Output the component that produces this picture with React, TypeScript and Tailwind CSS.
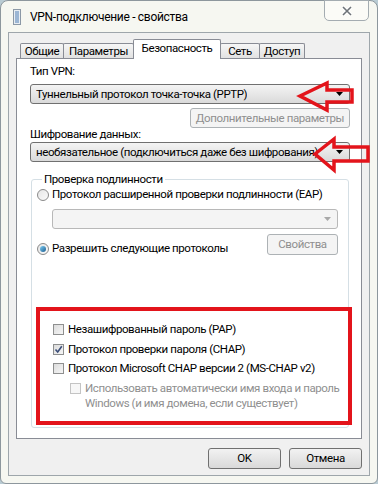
import type { ReactNode } from 'react'

const FONT = { fontFamily: 'Roboto, "Liberation Sans", Arial, sans-serif' }

function ComboArrow({ disabled }: { disabled?: boolean }) {
  return (
    <svg width="7" height="4" viewBox="0 0 7 4" className="shrink-0">
      <path d="M0 0 L7 0 L3.5 4 Z" fill={disabled ? '#a8a8a8' : '#000'} />
    </svg>
  )
}

function Combo({ text, disabled }: { text?: string; disabled?: boolean }) {
  return (
    <div
      className={`h-[20px] flex items-center justify-between pl-[5px] pr-[6px] rounded-[3px] border ${
        disabled
          ? 'border-[#b8b8b8] bg-[#f4f4f4]'
          : 'border-[#707070] bg-linear-to-b from-[#f4f4f4] to-[#dadada]'
      }`}
    >
      <span className="truncate">{text}</span>
      <ComboArrow disabled={disabled} />
    </div>
  )
}

function Button({
  children,
  disabled,
  className = '',
}: {
  children: ReactNode
  disabled?: boolean
  className?: string
}) {
  return (
    <div
      className={`flex items-center justify-center rounded-[3px] border ${
        disabled
          ? 'border-[#adb2b5] bg-[#f4f4f4] text-[#8f8f8f]'
          : 'border-[#707070] bg-linear-to-b from-[#f2f2f2] to-[#d9d9d9] text-black'
      } ${className}`}
    >
      {children}
    </div>
  )
}

function Radio({ checked }: { checked?: boolean }) {
  return (
    <span className="w-[12px] h-[12px] rounded-full border border-[#8a8a8a] bg-linear-to-br from-[#e6e6e6] to-[#fafafa] flex items-center justify-center shrink-0">
      {checked && (
        <span className="w-[6px] h-[6px] rounded-full bg-linear-to-br from-[#7fd0f6] to-[#1a5d8f]" />
      )}
    </span>
  )
}

function Check({ checked, disabled }: { checked?: boolean; disabled?: boolean }) {
  return (
    <span
      className={`w-[11px] h-[11px] border flex items-center justify-center shrink-0 ${
        disabled
          ? 'border-[#c4c4c4] bg-[#f7f7f7]'
          : 'border-[#8e8f8f] bg-linear-to-br from-[#dcdcdc] to-[#f6f6f6]'
      }`}
    >
      {checked && (
        <svg width="9" height="9" viewBox="0 0 9 9">
          <path d="M1.5 4.5 L3.7 7 L7.8 1.2" fill="none" stroke="#3b4e79" strokeWidth="1.6" />
        </svg>
      )}
    </span>
  )
}

const TABS = [
  { label: 'Общие', w: 'w-[44px]' },
  { label: 'Параметры', w: 'w-[71px]' },
  { label: 'Безопасность', w: 'w-[88px]', active: true },
  { label: 'Сеть', w: 'w-[40px]' },
  { label: 'Доступ', w: 'w-[46px]' },
]

export default function App() {
  return (
    <div
      className="relative w-[378px] h-[484px] bg-[#b9cbd3] text-[11.5px] leading-[15px] text-black whitespace-nowrap tracking-[-0.4px]"
      style={FONT}
    >
      <div className="h-full flex flex-col rounded-t-[8px] rounded-b-[6px] border border-[#8d979d] bg-[#f6f7f1] px-[7px] pb-[7px]">
        {/* title bar */}
        <div className="h-[31px] flex items-start shrink-0">
          <svg width="8" height="16" viewBox="0 0 8 16" className="mt-[8px] ml-[5px]">
            <rect x="0.5" y="0.5" width="7" height="15" fill="#e8edf2" stroke="#8b98a6" />
            <path d="M2 3 H6 M2 5 H6 M2 7 H6 M2 9 H6 M2 11 H6 M2 13 H6" stroke="#4f7fb5" strokeWidth="1" />
          </svg>
          <span className="ml-[9px] mt-[9px] text-[12px] tracking-[-0.3px] text-black">VPN-подключение - свойства</span>
          <div className="ml-auto -mt-px mr-px w-[45px] h-[21px] rounded-b-[5px] border border-[#a4acb1] bg-[#fbfbf7] flex items-center justify-center">
            <svg width="12" height="10" viewBox="0 0 12 10">
              <path d="M2 1 L10 9 M10 1 L2 9" stroke="#ffffff" strokeWidth="3.2" />
              <path d="M2 1 L10 9 M10 1 L2 9" stroke="#6e7378" strokeWidth="1.6" />
            </svg>
          </div>
        </div>

        {/* client area */}
        <div className="flex-1 flex flex-col border border-[#9ea6ab] bg-[#f0f0f0] pl-[7px] pr-[7px] pt-[6px]">
          <div className="flex items-end h-[19px] pl-[4px] shrink-0">
            {TABS.map((t) =>
              t.active ? (
                <div
                  key={t.label}
                  className={`${t.w} h-[20px] -mb-px -ml-px relative z-10 bg-white border border-b-0 border-[#898c95] rounded-t-[2px] flex items-start justify-center pt-[1px]`}
                >
                  {t.label}
                </div>
              ) : (
                <div
                  key={t.label}
                  className={`${t.w} h-[15px] bg-linear-to-b from-[#f6f6f6] to-[#e1e1e1] border border-b-0 border-[#898c95] rounded-t-[2px] flex items-center justify-center -ml-px first:ml-0`}
                >
                  {t.label}
                </div>
              )
            )}
          </div>

          {/* tab panel */}
          <div className="h-[381px] border border-[#898c95] bg-white pl-[13px] pr-[11px] pt-[5px] flex flex-col shrink-0">
            <div>Тип VPN:</div>
            <div className="mt-[5px]">
              <Combo text="Туннельный протокол точка-точка (PPTP)" />
            </div>
            <div className="flex justify-end mt-[4px]">
              <Button disabled className="w-[160px] h-[20px]">
                Дополнительные параметры
              </Button>
            </div>
            <div className="mt-[-1px]">Шифрование данных:</div>
            <div className="mt-[0px]">
              <Combo text="необязательное (подключиться даже без шифрования)" />
            </div>

            <fieldset className="mt-[10px] mx-[1px] min-w-0 h-[256px] border border-[#d5dfe5] rounded-[3px] pl-[5px] pr-[10px]">
              <legend className="ml-[5px] px-[2px]">Проверка подлинности</legend>
              <div className="flex items-center gap-[3px] h-[15px]">
                <Radio />
                <span>Протокол расширенной проверки подлинности (EAP)</span>
              </div>
              <div className="mt-[7px] pl-[15px]">
                <Combo disabled />
              </div>
              <div className="flex items-start justify-between">
                <div className="flex items-center gap-[3px] h-[15px] mt-[12px]">
                  <Radio checked />
                  <span>Разрешить следующие протоколы</span>
                </div>
                <Button disabled className="w-[71px] h-[21px] mt-[5px]">
                  Свойства
                </Button>
              </div>

              <div className="mt-[51px] -ml-[1px] -mr-[14px] border-4 border-[#e3141b] pl-[13px] pt-[11px] pb-[10px] flex flex-col">
                <div className="flex items-center gap-[4px] h-[15px]">
                  <Check />
                  <span>Незашифрованный пароль (PAP)</span>
                </div>
                <div className="flex items-center gap-[4px] h-[15px] mt-[5px]">
                  <Check checked />
                  <span>Протокол проверки пароля (CHAP)</span>
                </div>
                <div className="flex items-center gap-[4px] h-[15px] mt-[4px]">
                  <Check />
                  <span>Протокол Microsoft CHAP версии 2 (MS-CHAP v2)</span>
                </div>
                <div className="flex items-start gap-[4px] mt-[5px] pl-[17px] text-[#8f8f8f]">
                  <span className="mt-[2px]">
                    <Check disabled />
                  </span>
                  <span>
                    Использовать автоматически имя входа и пароль
                    <br />
                    Windows (и имя домена, если существует)
                  </span>
                </div>
              </div>
            </fieldset>
          </div>

          {/* bottom buttons */}
          <div className="flex justify-end gap-[8px] mt-[9px]">
            <Button className="w-[73px] h-[21px]">OK</Button>
            <Button className="w-[73px] h-[21px]">Отмена</Button>
          </div>
        </div>
      </div>

      {/* red annotation arrows */}
      <svg className="absolute inset-0 pointer-events-none" width="378" height="484" viewBox="0 0 378 484">
        <polygon
          points="300,96 327,83 327,90 352,90 352,102 327,102 327,110"
          fill="none"
          stroke="#e3141b"
          strokeWidth="3.5"
        />
        <polygon
          points="315,154 334,139 334,147 368,147 368,161 334,161 334,170"
          fill="none"
          stroke="#e3141b"
          strokeWidth="3.5"
        />
      </svg>
    </div>
  )
}
